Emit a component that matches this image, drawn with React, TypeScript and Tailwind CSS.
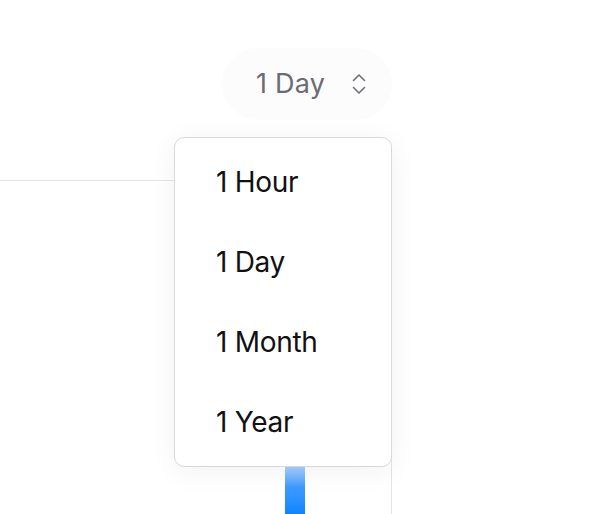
import React from "react";

const options = ["1 Hour", "1 Day", "1 Month", "1 Year"];

const App: React.FC = () => {
  return (
    <div
      className="relative w-[610px] h-[514px] overflow-hidden bg-white"
      style={{ fontFamily: "Inter, 'Noto Sans', sans-serif" }}
    >
      {/* Range selector */}
      <div className="flex pt-[48px] pl-[222px]">
        <button className="flex items-center w-[170px] h-[72px] rounded-full bg-[#fcfcfc] pl-[34px] text-[27px] text-[#6b6b73] tracking-[0.2px]">
          <span>1 Day</span>
          <svg
            className="ml-[27px]"
            width="14"
            height="26"
            viewBox="0 0 14 26"
            fill="none"
            stroke="#6e6e76"
            strokeWidth="1.6"
            strokeLinecap="round"
            strokeLinejoin="round"
          >
            <path d="M1.5 9.5 7 4l5.5 5.5" />
            <path d="M1.5 16.5 7 22l5.5-5.5" />
          </svg>
        </button>
      </div>

      {/* Chart */}
      <div className="mt-[60px] w-[392px] h-[334px] border-t border-r border-[#e4e4e7] flex items-end pl-[285px]">
        <div className="w-[20px] h-[60px] bg-gradient-to-b from-[#e3efff] via-[#3d9bff] via-55% to-[#0a84ff]" />
      </div>

      {/* Dropdown menu */}
      <div className="absolute left-[174px] top-[137px] w-[218px] h-[330px] rounded-[10px] border border-[#d8d8de] bg-white py-[4px] shadow-[0_4px_28px_rgba(0,0,0,0.06)]">
        {options.map((o) => (
          <div
            key={o}
            className="flex items-center h-[80px] pl-[41px] text-[28px] text-[#111114] tracking-[-0.3px]"
          >
            {o}
          </div>
        ))}
      </div>
    </div>
  );
};

export default App;
